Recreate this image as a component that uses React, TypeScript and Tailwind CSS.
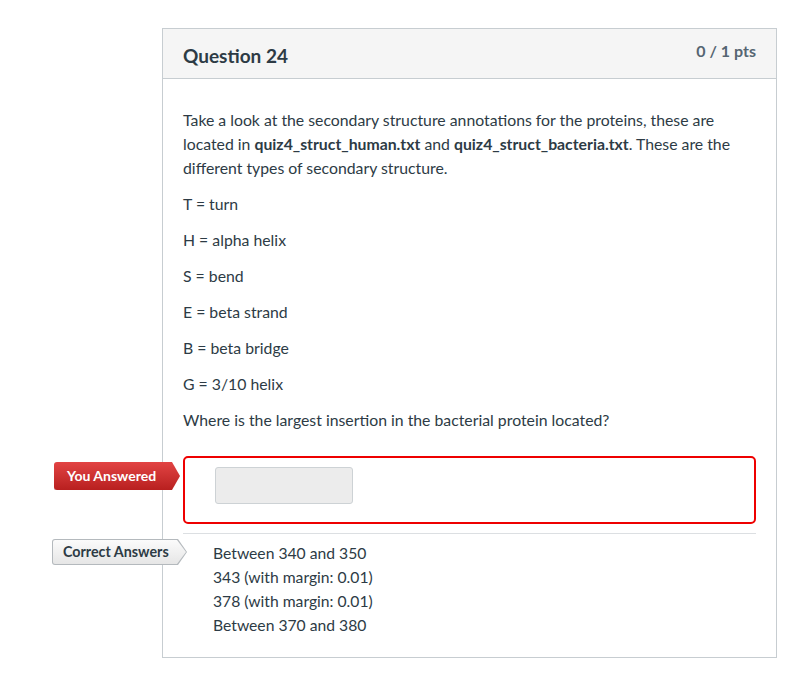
import React from "react";

const types = [
  "T = turn",
  "H = alpha helix",
  "S = bend",
  "E = beta strand",
  "B = beta bridge",
  "G = 3/10 helix",
];

const correctAnswers = [
  "Between 340 and 350",
  "343 (with margin: 0.01)",
  "378 (with margin: 0.01)",
  "Between 370 and 380",
];

export default function App() {
  return (
    <div
      className="min-h-[675px] bg-white pt-[28px] pl-[162px] text-[#2d3b45]"
      style={{ fontFamily: "Lato, 'Open Sans', sans-serif" }}
    >
      <div className="relative w-[615px] border border-[#c7cdd1] bg-white">
        {/* Header */}
        <div className="flex h-[50px] items-start justify-between border-b border-[#c7cdd1] bg-[#f5f5f5] px-[20px]">
          <h2 className="mt-[15px] text-[19px] font-bold leading-[24px] text-[#2d3b45]">Question 24</h2>
          <div className="mt-[12px] text-[16px] font-bold leading-[20px] text-[#556572]">0 / 1 pts</div>
        </div>

        {/* Body */}
        <div className="px-[20px] pt-[29px] pb-[20px]">
          <div className="space-y-[12px] text-[15.8px] leading-[24px]">
            <p>
              Take a look at the secondary structure annotations for the proteins, these are located in{" "}
              <strong>quiz4_struct_human.txt</strong> and <strong>quiz4_struct_bacteria.txt</strong>. These are the
              different types of secondary structure.
            </p>
            {types.map((t) => (
              <p key={t}>{t}</p>
            ))}
            <p>Where is the largest insertion in the bacterial protein located?</p>
          </div>

          {/* You answered */}
          <div className="relative mt-[24px] h-[68px] rounded-[5px] border-2 border-[#ee0000] pl-[30px] pt-[9px]">
            <div className="h-[37px] w-[138px] rounded-[3px] border border-[#cdd2d5] bg-[#ececec]" />
            <div className="absolute left-[-131px] top-[4px] h-[28px] w-[126px] rounded-l-[3px] bg-gradient-to-b from-[#e24343] to-[#b81f1f] pl-[13px] text-[14px] font-bold leading-[28px] text-white shadow-[0_1px_1px_rgba(0,0,0,0.25)] [clip-path:polygon(0_0,calc(100%-8px)_0,100%_50%,calc(100%-8px)_100%,0_100%)]">
              You Answered
            </div>
          </div>

          <div className="mt-[9px] border-t border-[#dcdfe2]" />

          {/* Correct answers */}
          <div className="relative pt-[7px] pl-[30px] text-[15.7px] leading-[24px]">
            {correctAnswers.map((a) => (
              <div key={a}>{a}</div>
            ))}
            <div className="absolute left-[-131px] top-[5px] h-[26px] w-[135px] rounded-l-[3px] bg-[#b4b9bd] [clip-path:polygon(0_0,calc(100%-9px)_0,100%_50%,calc(100%-9px)_100%,0_100%)]">
              <div className="absolute inset-[1px] rounded-l-[2px] bg-gradient-to-b from-[#fbfbfb] to-[#e6e6e6] pl-[10px] text-[14.3px] font-bold leading-[24px] text-[#2d3b45] [clip-path:polygon(0_0,calc(100%-9px)_0,100%_50%,calc(100%-9px)_100%,0_100%)]">
                Correct Answers
              </div>
            </div>
          </div>
        </div>
      </div>
    </div>
  );
}
